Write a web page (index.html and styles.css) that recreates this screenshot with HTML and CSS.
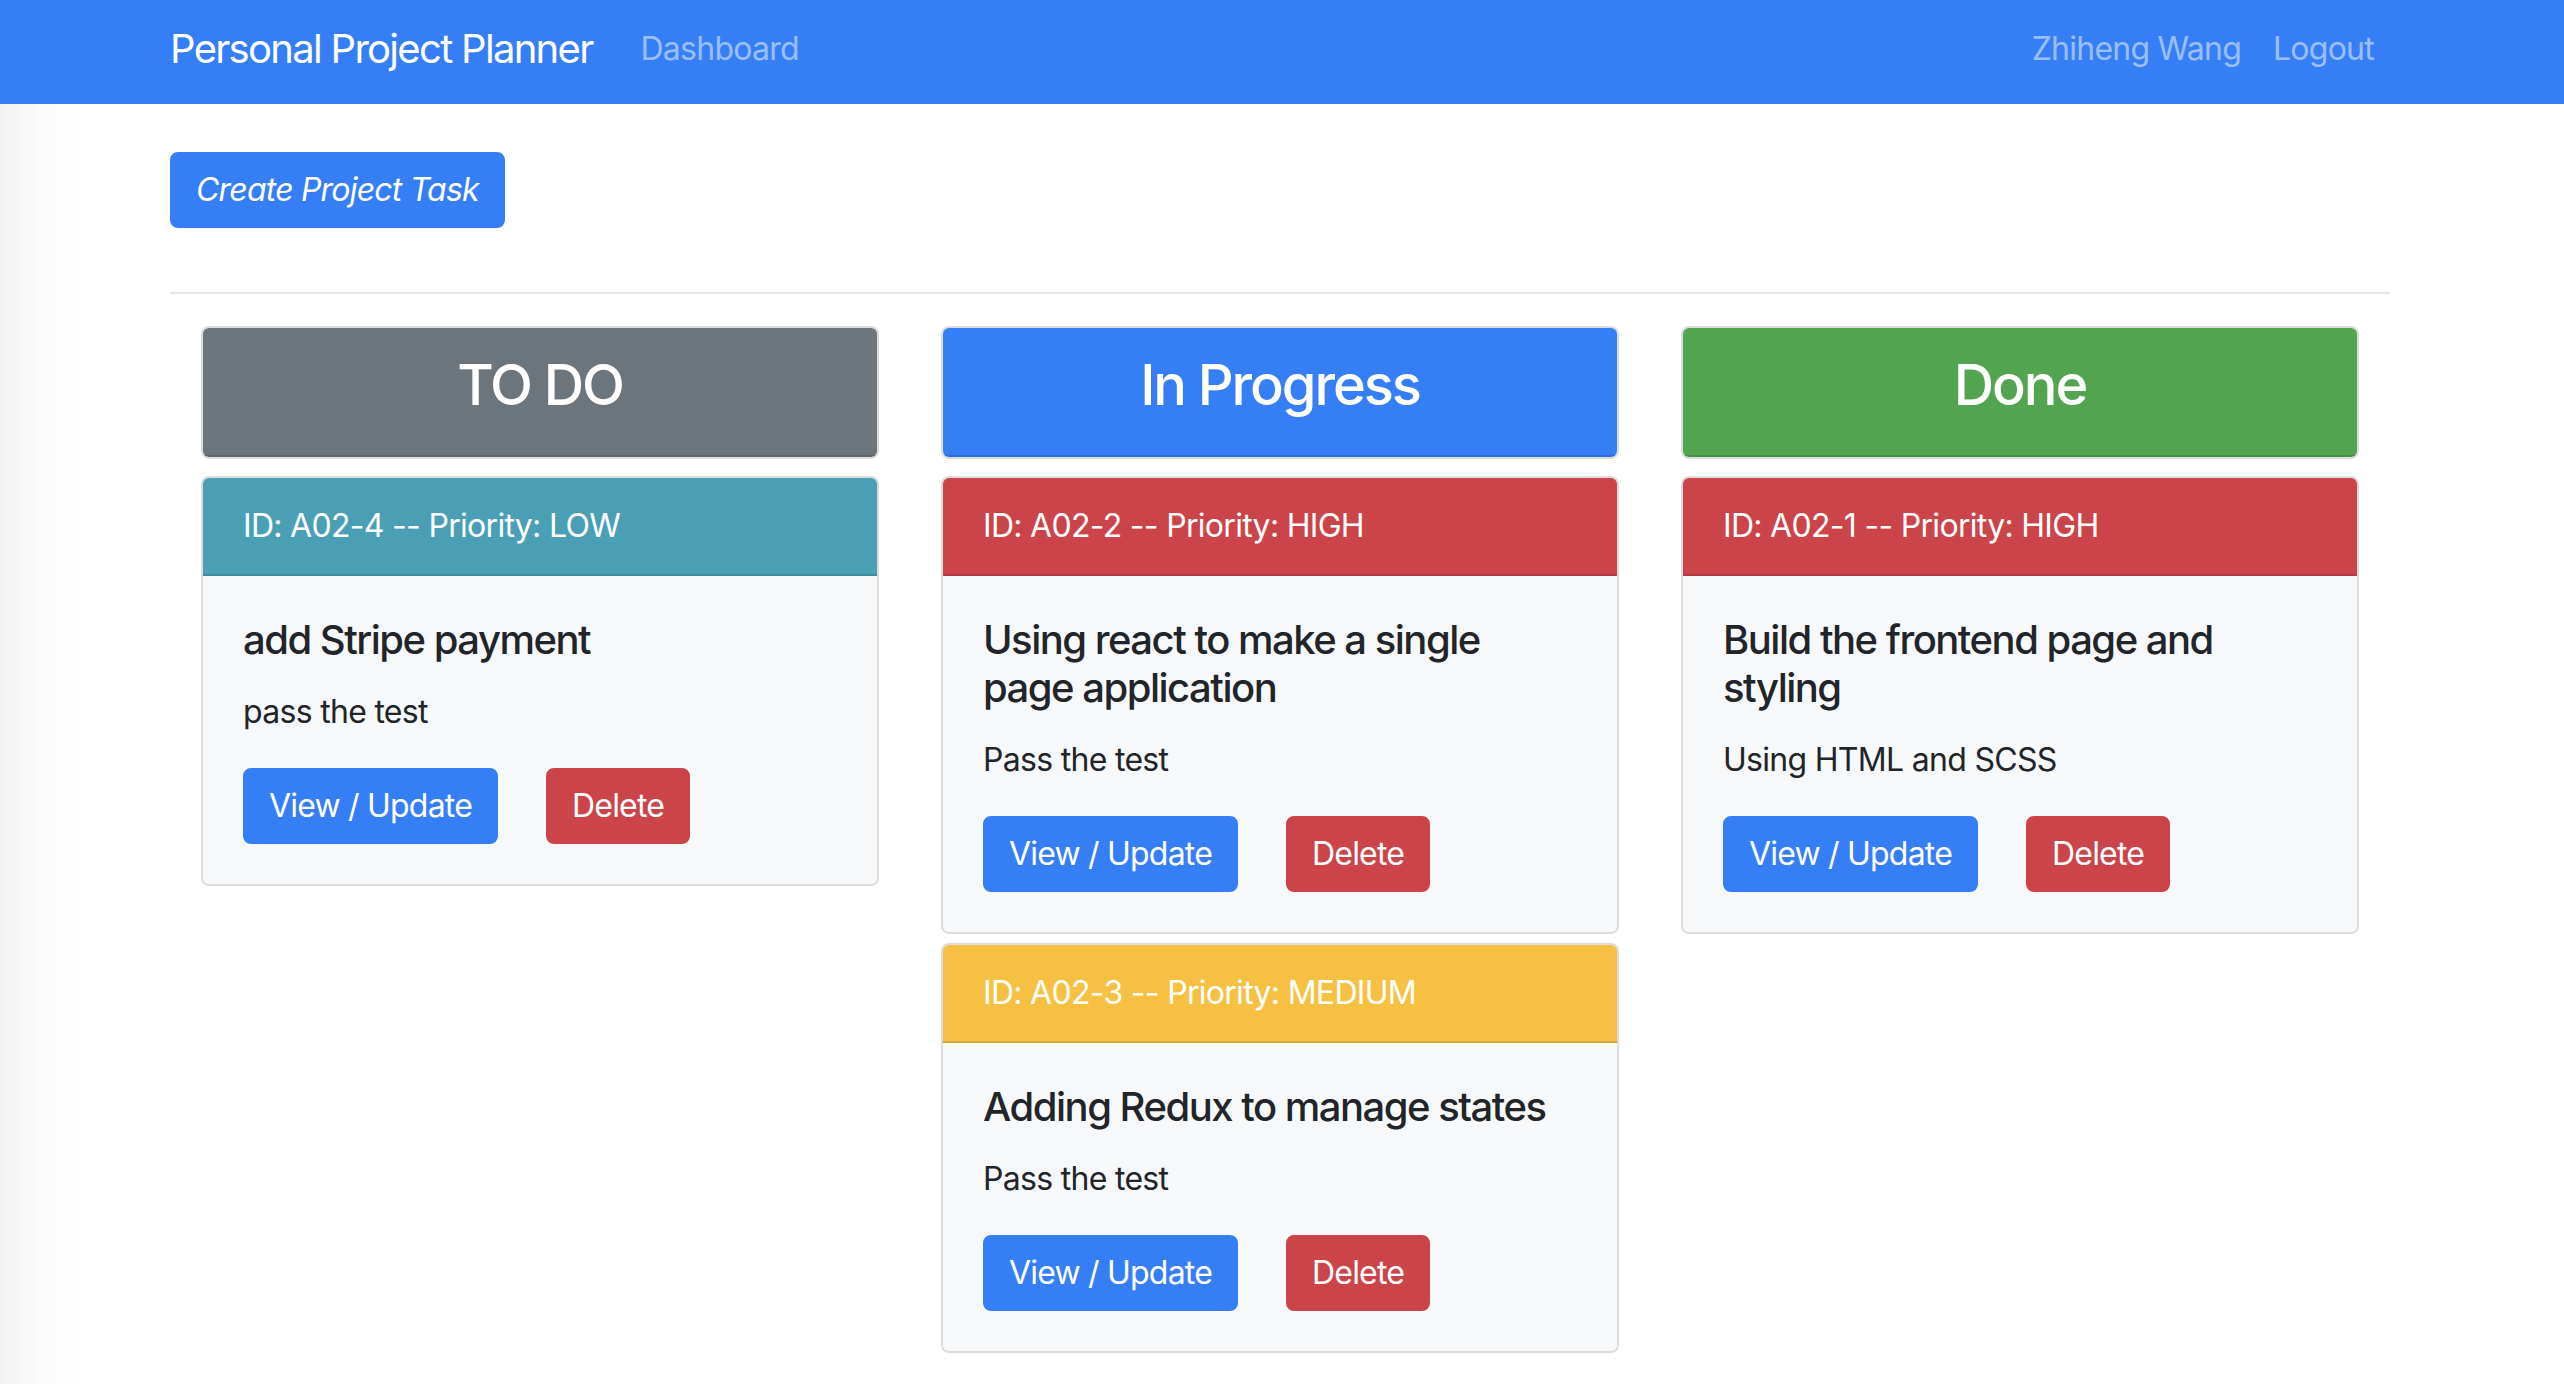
FILE: index.html
```html
<!DOCTYPE html>
<html lang="en">
<head>
<meta charset="utf-8">
<title>Personal Project Planner</title>
<link rel="stylesheet" href="styles.css">
</head>
<body>
<nav class="navbar">
  <div class="container nav-inner">
    <a class="brand" href="#">Personal Project Planner</a>
    <a class="nav-link" href="#">Dashboard</a>
    <div class="nav-right">
      <a class="nav-link" href="#">Zhiheng Wang</a>
      <a class="nav-link" href="#">Logout</a>
    </div>
  </div>
</nav>

<main class="container">
  <a class="btn btn-primary btn-create" href="#">Create Project Task</a>
  <hr class="divider">

  <div class="board">
    <section class="column">
      <div class="status-card">
        <div class="status-header bg-secondary"><h3>TO DO</h3></div>
      </div>
      <div class="task-card">
        <div class="task-header bg-info">ID: A02-4 -- Priority: LOW</div>
        <div class="task-body">
          <h5 class="task-title">add Stripe payment</h5>
          <p class="task-text">pass the test</p>
          <div class="task-actions">
            <a class="btn btn-primary" href="#">View / Update</a>
            <button class="btn btn-danger">Delete</button>
          </div>
        </div>
      </div>
    </section>

    <section class="column">
      <div class="status-card">
        <div class="status-header bg-primary"><h3>In Progress</h3></div>
      </div>
      <div class="task-card">
        <div class="task-header bg-danger">ID: A02-2 -- Priority: HIGH</div>
        <div class="task-body">
          <h5 class="task-title">Using react to make a single page application</h5>
          <p class="task-text">Pass the test</p>
          <div class="task-actions">
            <a class="btn btn-primary" href="#">View / Update</a>
            <button class="btn btn-danger">Delete</button>
          </div>
        </div>
      </div>
      <div class="task-card">
        <div class="task-header bg-warning">ID: A02-3 -- Priority: MEDIUM</div>
        <div class="task-body">
          <h5 class="task-title">Adding Redux to manage states</h5>
          <p class="task-text">Pass the test</p>
          <div class="task-actions">
            <a class="btn btn-primary" href="#">View / Update</a>
            <button class="btn btn-danger">Delete</button>
          </div>
        </div>
      </div>
    </section>

    <section class="column">
      <div class="status-card">
        <div class="status-header bg-success"><h3>Done</h3></div>
      </div>
      <div class="task-card">
        <div class="task-header bg-danger">ID: A02-1 -- Priority: HIGH</div>
        <div class="task-body">
          <h5 class="task-title">Build the frontend page and styling</h5>
          <p class="task-text">Using HTML and SCSS</p>
          <div class="task-actions">
            <a class="btn btn-primary" href="#">View / Update</a>
            <button class="btn btn-danger">Delete</button>
          </div>
        </div>
      </div>
    </section>
  </div>
</main>
</body>
</html>
```

FILE: styles.css
```css
* { box-sizing: border-box; }

html, body { margin: 0; padding: 0; }

body {
  font-family: "Inter", "Liberation Sans", sans-serif;
  font-size: 32px;
  line-height: 1.5;
  color: #212529;
  background: linear-gradient(90deg, #f2f2f2 0, #fbfbfb 40px, #ffffff 80px);
  min-height: 1384px;
}

a { text-decoration: none; }

.container {
  width: 2220px;
  margin-left: 170px;
}

/* navbar */
.navbar {
  background: #357ef6;
  height: 104px;
}
.nav-inner {
  display: flex;
  align-items: center;
  height: 104px;
  padding-bottom: 6px;
}
.brand {
  color: #fff;
  font-size: 40px;
  line-height: 60px;
  margin-right: 32px;
  letter-spacing: -1.7px;
}
.nav-link {
  color: rgba(255, 255, 255, 0.5);
  font-size: 32px;
  line-height: 48px;
  padding: 0 16px;
  letter-spacing: -0.75px;
}
.nav-right {
  margin-left: auto;
  display: flex;
}

/* buttons */
.btn {
  display: inline-block;
  font-family: inherit;
  font-size: 32px;
  line-height: 48px;
  padding: 12px 24px;
  border: 2px solid transparent;
  border-radius: 8px;
  color: #fff;
  cursor: pointer;
  letter-spacing: -0.8px;
}
.btn-primary { background: #357ef6; border-color: #357ef6; }
.btn-danger { background: #cb444a; border-color: #cb444a; }

.btn-create {
  margin-top: 48px;
  font-style: italic;
}

.divider {
  border: 0;
  border-top: 2px solid #e4e4e4;
  margin: 64px 0 32px;
}

/* board */
.board {
  display: grid;
  grid-template-columns: repeat(3, 740px);
}
.column {
  padding: 0 31px;
}

.status-card {
  border: 2px solid #dcdcdc;
  border-radius: 8px;
  overflow: hidden;
  margin-bottom: 17px;
}
.status-header {
  padding: 24px 40px;
  border-bottom: 2px solid rgba(0, 0, 0, 0.125);
  color: #fff;
  text-align: center;
}
.status-header h3 {
  margin: 0 0 12px;
  font-size: 56px;
  line-height: 1.2;
  font-weight: 500;
  letter-spacing: -2.1px;
}

.bg-secondary { background: #6c747c; }
.bg-primary { background: #357ef6; }
.bg-success { background: #53a451; }
.bg-info { background: #4a9fb5; }
.bg-danger { background: #cb444a; }
.bg-warning { background: #f6c143; }

.task-card {
  border: 2px solid #dcdcdc;
  border-radius: 8px;
  overflow: hidden;
  margin-bottom: 9px;
}
.task-header {
  padding: 24px 40px;
  color: #fff;
  border-bottom: 2px solid rgba(0, 0, 0, 0.125);
  letter-spacing: -0.7px;
}
.task-body {
  background: #f7f8fa;
  padding: 40px;
}
.task-title {
  font-size: 40px;
  line-height: 48px;
  font-weight: 500;
  margin: 0 0 24px;
  letter-spacing: -1.5px;
}
.task-text {
  margin: 0 0 32px;
  letter-spacing: -0.7px;
}
.task-actions {
  display: flex;
  gap: 48px;
}
```
